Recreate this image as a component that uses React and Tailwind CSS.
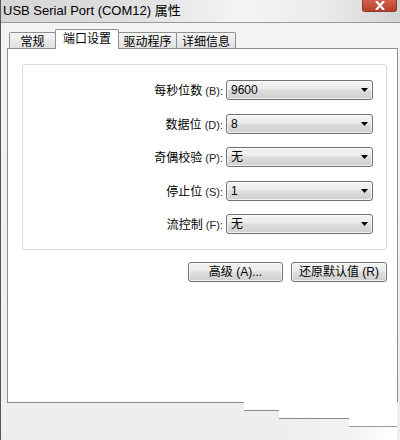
import React from "react";

const FONT = { fontFamily: '"Liberation Sans", "Noto Sans CJK SC", sans-serif' };

function Arrow() {
  return (
    <svg width="7" height="4" viewBox="0 0 7 4" className="shrink-0">
      <path d="M0 0 H7 L3.5 4 Z" fill="#000" />
    </svg>
  );
}

function Combo({ value }) {
  return (
    <div className="w-[147px] h-[20px] shrink-0 rounded-[3px] border border-[#707070] bg-[linear-gradient(to_bottom,#f3f3f3_0%,#ebebeb_45%,#dddddd_50%,#cfcfcf_100%)] flex items-center justify-between pl-[4px] pr-[4px] shadow-[inset_0_0_0_1px_rgba(255,255,255,0.7)]">
      <span className="text-[12px] leading-none text-black">{value}</span>
      <Arrow />
    </div>
  );
}

function Row({ cjk, key1, value }) {
  return (
    <div className="flex items-center justify-end gap-[3px] h-[20px]">
      <span className="text-right leading-none text-black whitespace-nowrap">
        <span className="text-[12px]">{cjk}</span>
        <span className="text-[11px] text-[#222]"> ({key1}):</span>
      </span>
      <Combo value={value} />
    </div>
  );
}

function Btn({ children, w }) {
  return (
    <div
      className={`${w} h-[20px] rounded-[3px] border border-[#707070] bg-[linear-gradient(to_bottom,#f2f2f2_0%,#ebebeb_45%,#dddddd_50%,#cfcfcf_100%)] flex items-center justify-center shadow-[inset_0_0_0_1px_rgba(255,255,255,0.7)]`}
    >
      <span className="text-[12px] leading-none text-black whitespace-nowrap">{children}</span>
    </div>
  );
}

export default function App() {
  return (
    <div style={FONT} className="w-[400px] h-[440px] overflow-hidden bg-[#f0f0f0] border-l border-[#555] flex flex-col">
      {/* title bar */}
      <div className="h-[23px] shrink-0 border-b border-[#9a9a9a] bg-[linear-gradient(to_right,#d6d6d6_0%,#dedede_30%,#f4f4f4_60%,#ececec_80%,#d4d4d4_100%)] flex items-start justify-between pl-[2px] pr-[3px]">
        <span className="pt-[3px] text-[13px] leading-[15px] text-black whitespace-nowrap">USB Serial Port (COM12) 属性</span>
        <div className="w-[35px] h-[12px] rounded-b-[3px] border border-t-0 border-[#8a3a2c] bg-[linear-gradient(to_bottom,#d0604c,#b8402c)] flex items-center justify-center">
          <svg width="12" height="9" viewBox="0 0 12 9">
            <path d="M2 0 L10 9 M10 0 L2 9" stroke="#fff" strokeWidth="2.2" />
          </svg>
        </div>
      </div>

      <div className="flex flex-col pl-[6px] pr-[3px] bg-[linear-gradient(to_bottom,#f3f3f3,#eeeeee)]">
        {/* tabs */}
        <div className="h-[26px] flex items-end pl-[2px] relative z-10">
          <div className="w-[47px] h-[16px] mb-px border border-b-0 border-[#8e8f8f] rounded-t-[2px] bg-[linear-gradient(to_bottom,#f5f5f5,#e0e0e0)] flex items-center justify-center pt-[2px]">
            <span className="text-[12px] leading-none">常规</span>
          </div>
          <div className="-ml-px w-[64px] h-[20px] border border-b-0 border-[#8e8f8f] rounded-t-[2px] bg-white flex items-start justify-center pt-[3px] relative z-10">
            <span className="text-[12px] leading-none">端口设置</span>
          </div>
          <div className="-ml-px w-[59px] h-[16px] mb-px border border-b-0 border-[#8e8f8f] rounded-t-[2px] bg-[linear-gradient(to_bottom,#f5f5f5,#e0e0e0)] flex items-center justify-center pt-[2px]">
            <span className="text-[12px] leading-none">驱动程序</span>
          </div>
          <div className="-ml-px w-[60px] h-[16px] mb-px border border-b-0 border-[#8e8f8f] rounded-t-[2px] bg-[linear-gradient(to_bottom,#f5f5f5,#e0e0e0)] flex items-center justify-center pt-[2px]">
            <span className="text-[12px] leading-none">详细信息</span>
          </div>
        </div>

        {/* panel */}
        <div className="-mt-px w-[391px] h-[354px] border border-b-0 border-[#8e8f8f] bg-white flex flex-col pl-[14px] pr-[10px] pt-[15px]">
          <div className="w-[365px] h-[186px] rounded-[3px] border border-[#dcdcdc] shadow-[1px_1px_0_#ffffff] flex flex-col gap-[13.5px] pt-[15px] pr-[13px]">
            <Row cjk="每秒位数" key1="B" value="9600" />
            <Row cjk="数据位" key1="D" value="8" />
            <Row cjk="奇偶校验" key1="P" value={<span className="text-[12px]">无</span>} />
            <Row cjk="停止位" key1="S" value="1" />
            <Row cjk="流控制" key1="F" value={<span className="text-[12px]">无</span>} />
          </div>
          <div className="mt-[12px] flex justify-end gap-[8px] pr-[0px]">
            <Btn w="w-[95px]">高级 (A)...</Btn>
            <Btn w="w-[96px]">还原默认值 (R)</Btn>
          </div>
        </div>

        {/* bottom faded edge */}
        <div className="h-[38px] flex">
          <div className="w-[237px] border-t border-[#8a8a8a] bg-[#eeeeee]" />
          <div className="w-[35px] flex flex-col">
            <div className="h-[8px] bg-white" />
            <div className="flex-1 border-t border-[#8a8a8a] bg-[#eeeeee]" />
          </div>
          <div className="w-[70px] flex flex-col">
            <div className="h-[16px] bg-white" />
            <div className="flex-1 border-t border-[#8a8a8a] bg-[linear-gradient(to_right,#eeeeee,#f2f2f2)]" />
          </div>
          <div className="flex-1 flex flex-col">
            <div className="h-[24px] bg-white" />
            <div className="flex-1 border-t border-[#9a9a9a] bg-[linear-gradient(to_right,#f2f2f2,#ffffff)]" />
          </div>
        </div>
      </div>
    </div>
  );
}
